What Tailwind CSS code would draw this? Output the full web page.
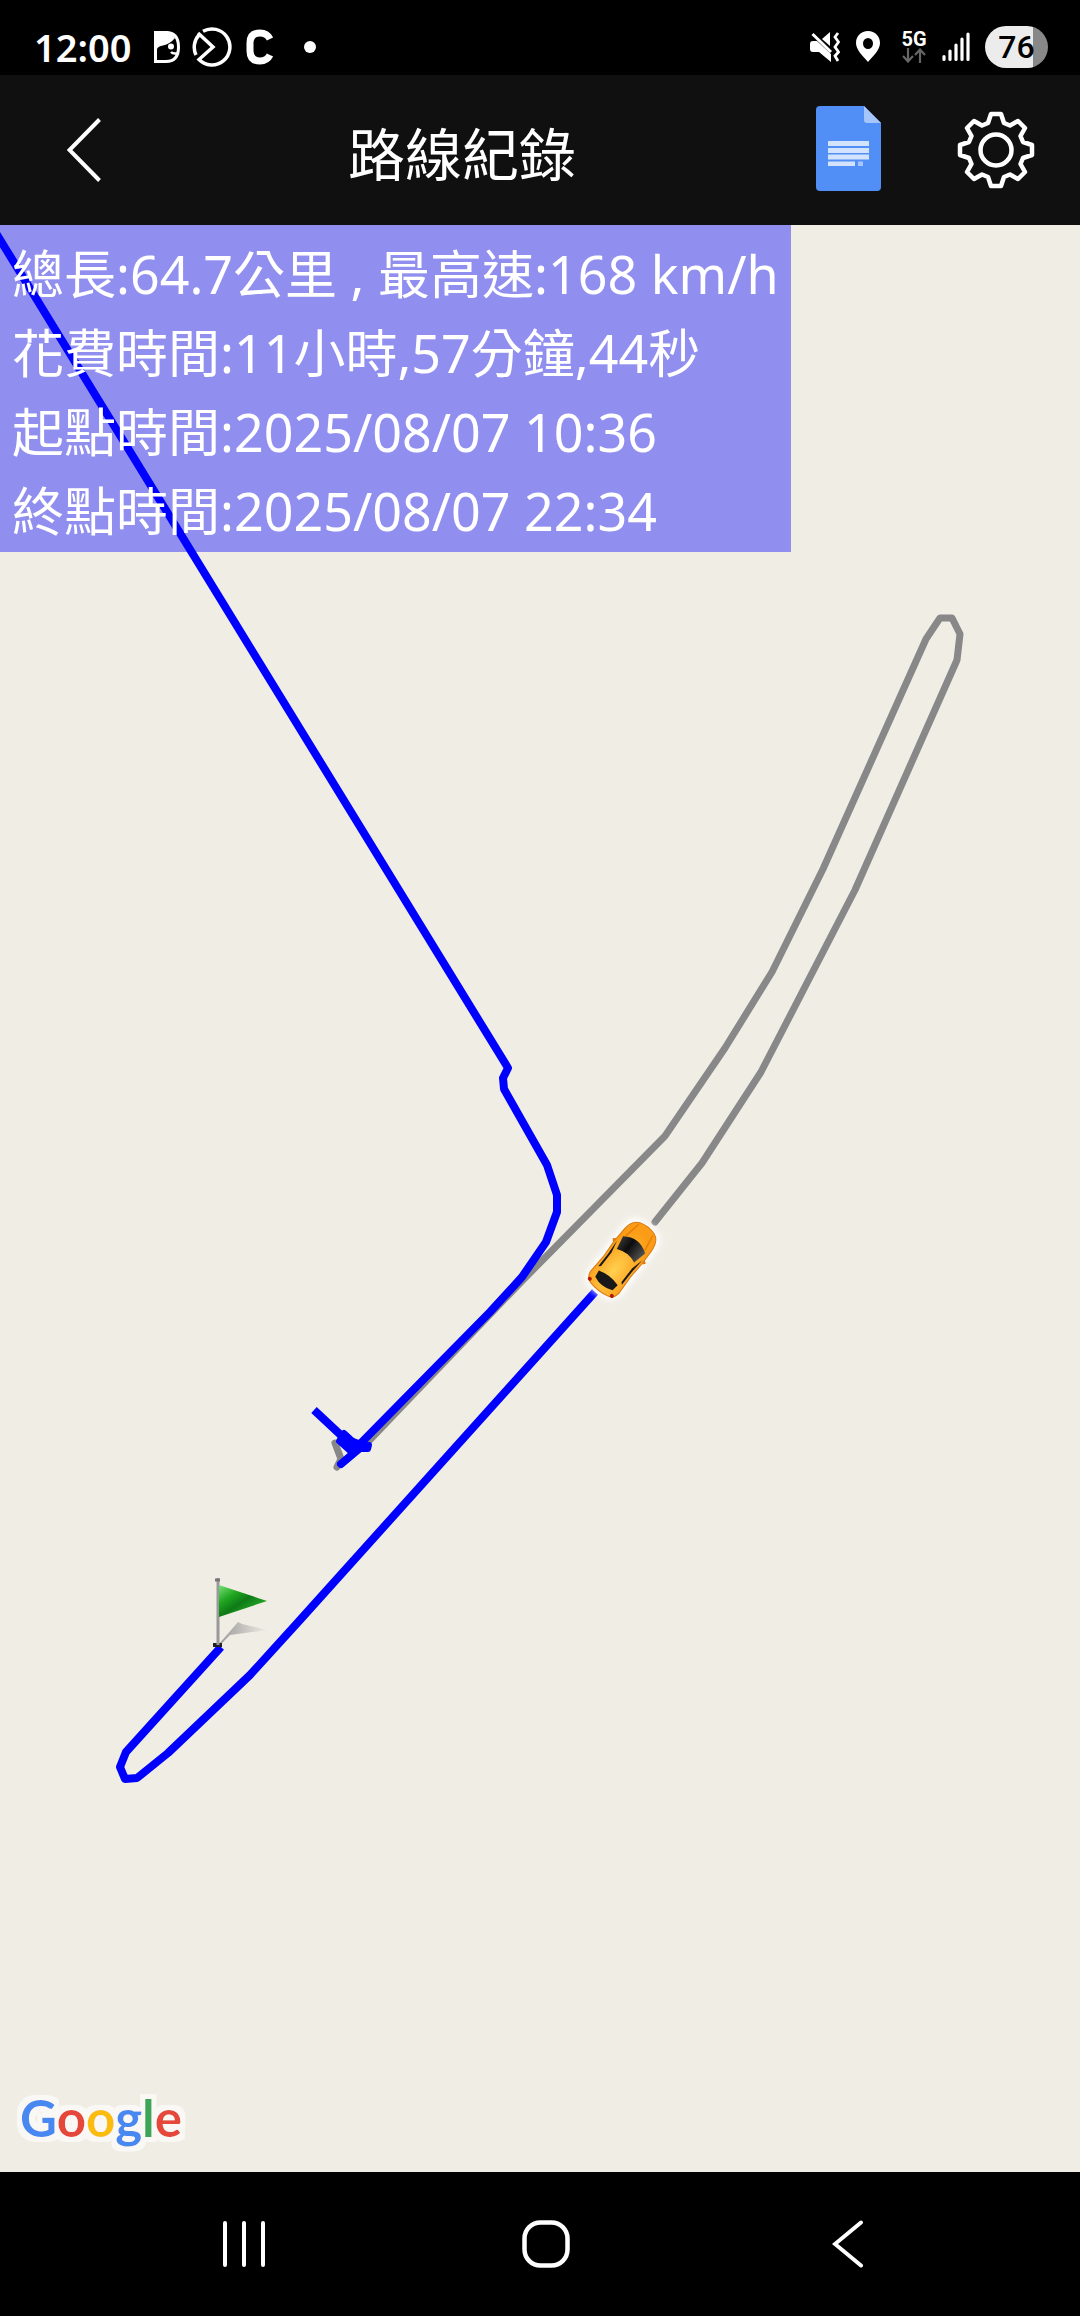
<!DOCTYPE html>
<html lang="zh-Hant">
<head>
    <meta charset="UTF-8">
    <meta name="viewport" content="width=device-width, initial-scale=1.0">
    <title>路線紀錄</title>
    <script src="https://cdn.jsdelivr.net/npm/@tailwindcss/browser@4"></script>
</head>
<body class="flex flex-col min-h-screen bg-black text-white font-['Noto_Sans','Noto_Sans_CJK_TC',sans-serif]">
    <!-- status bar -->
    <div class="flex items-center justify-between h-[75px] pt-[22px] pl-[34px] pr-8 pb-1">
        <div class="flex items-center">
            <span class="w-[120px] text-[38px] leading-[40px] font-semibold">12:00</span>
            <svg class="w-[26px] h-8 mr-3" viewBox="0 0 26 32">
                <path d="M1.500 1.500H12Q24.500 1.500 24.500 16T12 30.500H1.500Z" fill="none" stroke="#fff" stroke-width="3"/>
                <path d="M0 0H13Q18 2 21 7Q16 13 9 14.500Q4 15 3 18L0 20Z" fill="#fff"/>
                <circle cx="17" cy="15.500" r="3" fill="#fff"/>
                <path d="M17 21Q19 23.500 25 22" fill="none" stroke="#fff" stroke-width="2.500"/>
            </svg>
            <svg class="w-10 h-10 mr-[14px]" viewBox="0 0 40 40" fill="none" stroke="#fff" stroke-width="3.500">
                <path d="M11 4.300A18 18 0 1 1 7 32.500L21 20L6 6"/>
                <path d="M7.500 7.500A18 18 0 0 0 4 28"/>
            </svg>
            <svg class="w-7 h-9 mr-[30px]" viewBox="0 0 28 36">
                <path d="M24 10Q21 4 14 4Q4 4 4 14V22Q4 32 14 32Q21 32 24 26" fill="none" stroke="#fff" stroke-width="7"/>
            </svg>
            <span class="size-3 rounded-full bg-white"></span>
        </div>
        <div class="flex items-center">
            <svg class="w-[30px] h-[30px] mr-4" viewBox="0 0 30 30">
                <path d="M0 12Q0 9 3 9H7L21 22V30L9 20H3Q0 20 0 17ZM12 7L20 0V14Z" fill="#fff"/>
                <path d="M2.500 2L21 20" stroke="#fff" stroke-width="3"/>
                <path d="M28 1L25 5L28.500 10L25 15L28.500 20L25 24L28 29" fill="none" stroke="#fff" stroke-width="2.800"/>
            </svg>
            <svg class="w-6 h-[31px] mr-[22px]" viewBox="0 0 24 31">
                <path fill-rule="evenodd" d="M12 0C19 0 24 5 24 12C24 19 17 25 12 31C7 25 0 19 0 12C0 5 5 0 12 0ZM12 7A5 5.500 0 0 0 12 18A5 5.500 0 0 0 12 7Z" fill="#fff"/>
            </svg>
            <div class="flex flex-col items-center w-6 mr-4">
                <span class="text-[20px] leading-[18px] font-bold font-['Roboto',sans-serif]">5G</span>
                <svg class="w-6 h-[15px]" viewBox="0 0 24 15" fill="none" stroke="#666" stroke-width="2.200">
                    <path d="M6 0V13M1 8L6 13.500L11 8M18 15V2M13 7L18 1.500L23 7"/>
                </svg>
            </div>
            <svg class="w-7 h-[30px] mr-[15px]" viewBox="0 0 28 30" stroke="#fff" stroke-width="3.200" stroke-linecap="round">
                <path d="M2 24.500V27.500M8 19V27.500M14 13V27.500M20 7V27.500M26 2V27.500"/>
            </svg>
            <span class="flex items-center justify-center w-[63px] h-[42px] rounded-full bg-linear-to-r from-[#ececec] from-76% to-[#888888] to-76% text-black text-[32px] leading-[42px] font-medium font-['Roboto',sans-serif]">76</span>
        </div>
    </div>

    <!-- title bar -->
    <header class="flex items-center h-[150px] px-[10px] bg-[#101010]">
        <button class="flex justify-center w-[148px]" aria-label="返回">
            <svg class="w-[34px] h-16" viewBox="0 0 34 64" fill="none" stroke="#fff" stroke-width="4">
                <path d="M32.500 1.500L2.500 32L32.500 62.500"/>
            </svg>
        </button>
        <h1 class="flex-1 mr-2 pt-2 text-center text-[57px] leading-[72px]">路線紀錄</h1>
        <button class="flex justify-center w-[148px] pb-[3px]" aria-label="紀錄檔">
            <svg class="w-[65px] h-[85px]" viewBox="0 0 65 85">
                <path d="M4 0H48L65 17V81Q65 85 61 85H4Q0 85 0 81V4Q0 0 4 0Z" fill="#518ef5"/>
                <path d="M48 0L65 17H51Q48 17 48 14Z" fill="#a6c5fa"/>
                <path d="M12 35H53V40H12ZM12 42H53V47H12ZM12 48.500H53V53.500H12ZM12 55.500H39V60H12Z" fill="#d3e2fd"/>
                <path d="M42 55.500H47V60H42Z" fill="#a6c5fa"/>
            </svg>
        </button>
        <button class="flex justify-center w-[148px]" aria-label="設定">
            <svg class="w-20 h-20" viewBox="-40 -40 80 80" fill="none" stroke="#fff" stroke-width="4.500" stroke-linejoin="round">
                <path d="M-5 -36H5L8 -27L14 -24.500L22 -29L29 -22L24.500 -14L27 -8L36 -5V5L27 8L24.500 14L29 22L22 29L14 24.500L8 27L5 36H-5L-8 27L-14 24.500L-22 29L-29 22L-24.500 14L-27 8L-36 5V-5L-27 -8L-24.500 -14L-29 -22L-22 -29L-14 -24.500L-8 -27Z"/>
                <circle r="15.500"/>
            </svg>
        </button>
    </header>

    <!-- map -->
    <main class="relative flex-1 overflow-hidden bg-[#f0ede5]">
        <svg class="absolute inset-0 w-full h-full" viewBox="0 225 1080 1947" preserveAspectRatio="xMidYMid slice">
            <defs>
                <linearGradient id="flag" x1="0" y1="0" x2="1" y2="1">
                    <stop offset="0" stop-color="#7ae07a"/>
                    <stop offset=".3" stop-color="#1fa51f"/>
                    <stop offset=".5" stop-color="#0f7a17"/>
                    <stop offset=".7" stop-color="#1c9c22"/>
                </linearGradient>
                <linearGradient id="shade" x1="0" x2="1">
                    <stop offset="0" stop-color="#999"/>
                    <stop offset="1" stop-color="#999" stop-opacity="0"/>
                </linearGradient>
                <radialGradient id="paint" cx=".5" cy=".7" r=".6">
                    <stop offset="0" stop-color="#ffd050"/>
                    <stop offset="1" stop-color="#fb9c16"/>
                </radialGradient>
                <linearGradient id="glass" x1="0" x2="1">
                    <stop offset="0" stop-color="#333"/>
                    <stop offset=".4" stop-color="#0c0c0c"/>
                    <stop offset="1" stop-color="#555"/>
                </linearGradient>
                <filter id="glow" x="-50%" y="-50%" width="200%" height="200%">
                    <feGaussianBlur stdDeviation="3"/>
                </filter>
            </defs>
            <!-- not yet driven -->
            <g fill="none" stroke="#888" stroke-width="7" stroke-linejoin="round" stroke-linecap="round">
                <path d="M655 1222L702 1163L761 1072L855 890L957 660L960 634L952 618H940L926 639L823 869L772 972L725 1048L665 1136L522 1281L364 1446"/>
                <path d="M335 1443L341 1459L337 1467"/>
            </g>
            <!-- driven -->
            <g fill="none" stroke="#0000ff" stroke-width="8" stroke-linejoin="round">
                <path d="M-12 220L508 1068L503 1078L504 1089L547 1165L557 1195V1212L546 1242L522 1277L490 1312L360 1444"/>
                <path d="M314 1410L345 1439L369 1448"/>
                <path d="M341 1464L360 1448" stroke-linecap="round"/>
                <path d="M344 1433L356 1444L350 1451L339 1441ZM350 1451L358 1446L369 1445L368 1449L356 1449Z" fill="#0000ff" stroke-width="6"/>
                <path d="M595 1292L300 1620L250 1675L168 1753L137 1778L125 1779L120 1767L126 1752L221 1647"/>
            </g>
            <!-- start flag -->
            <path d="M219 1644L238 1622L242 1624L268 1630L230 1635L220 1645Z" fill="url(#shade)"/>
            <path d="M213 1645H222" stroke="#222" stroke-width="4"/>
            <path d="M218 1578V1645" stroke="#999" stroke-width="3"/>
            <path d="M215 1580H220" stroke="#777" stroke-width="3"/>
            <path d="M219 1585L267 1601L219 1617Z" fill="url(#flag)"/>
            <!-- car -->
            <g transform="translate(623 1259) rotate(38)">
                <rect x="-21" y="-43" width="42" height="86" rx="15" fill="#fff" filter="url(#glow)"/>
                <path d="M-16 -12L-20 -9M16 -12L20 -9" stroke="#e07a10" stroke-width="3"/>
                <path d="M-9 -39Q0 -42 9 -39Q17 -36 17.500 -24L18 -8L17 10L18 30Q17 37 11 38.500Q0 41 -11 38.500Q-17 37 -18 30L-17 10L-18 -8L-17.500 -24Q-17 -36 -9 -39Z" fill="url(#paint)" stroke="#d97a12" stroke-width="1"/>
                <path d="M-9 -37L-12 -20M9 -37L12 -20" stroke="#e87f0a" stroke-width="1.500"/>
                <path d="M-14 -18Q0 -28 14 -18L11 -4Q0 -9 -11 -4Z" fill="url(#glass)"/>
                <path d="M-12 24Q0 20 12 24L11 31Q0 36 -11 31Z" fill="#181818"/>
                <path d="M-16 -11L-13 2V19L-15 21L-15 5ZM16 -11L13 2V19L15 21L15 5Z" fill="#181818"/>
                <circle cx="-14" cy="36" r="2" fill="#b01808"/>
                <circle cx="14" cy="36" r="2" fill="#b01808"/>
            </g>
        </svg>

        <div class="absolute top-0 left-0 pt-[9px] pb-[2px] px-3 min-w-[789px] bg-[#0000ff]/40 text-[52px] leading-[79px] whitespace-nowrap">
            <p>總長:64.7公里 , 最高速:168 km/h</p>
            <p>花費時間:11小時,57分鐘,44秒</p>
            <p>起點時間:2025/08/07 10:36</p>
            <p>終點時間:2025/08/07 22:34</p>
        </div>

        <svg class="absolute bottom-1 left-3 w-48 h-24" viewBox="0 0 192 96">
            <filter id="halo" x="-10%" y="-20%" width="120%" height="140%">
                <feMorphology in="SourceAlpha" operator="dilate" radius="5" result="fat"/>
                <feFlood flood-color="#f9f8f5"/>
                <feComposite in2="fat" operator="in" result="edge"/>
                <feMerge><feMergeNode in="edge"/><feMergeNode in="SourceGraphic"/></feMerge>
            </filter>
            <text x="8" y="65" font-size="51" class="font-['Lato',sans-serif] font-bold" filter="url(#halo)"><tspan fill="#4688f1">G</tspan><tspan fill="#e5463a">o</tspan><tspan fill="#fabd0c">o</tspan><tspan fill="#4688f1">g</tspan><tspan fill="#3aa757">l</tspan><tspan fill="#e5463a">e</tspan></text>
        </svg>
    </main>

    <!-- navigation bar -->
    <nav class="flex items-center justify-center h-36 pl-3">
        <button class="flex justify-center w-[302px]" aria-label="最近使用">
            <svg class="w-12 h-12" viewBox="0 0 48 48" stroke="#fff" stroke-width="4" stroke-linecap="round">
                <path d="M5 3V45M24 3V45M43 3V45"/>
            </svg>
        </button>
        <button class="flex justify-center w-[302px]" aria-label="主畫面">
            <svg class="w-12 h-12" viewBox="0 0 48 48" fill="none" stroke="#fff" stroke-width="4.500">
                <rect x="2.500" y="2.500" width="43" height="43" rx="16"/>
            </svg>
        </button>
        <button class="flex justify-center w-[302px]" aria-label="上一頁">
            <svg class="w-8 h-12" viewBox="0 0 32 48" fill="none" stroke="#fff" stroke-width="4" stroke-linecap="round">
                <path d="M29 2.500L3 24L29 45.500"/>
            </svg>
        </button>
    </nav>
</body>
</html>
